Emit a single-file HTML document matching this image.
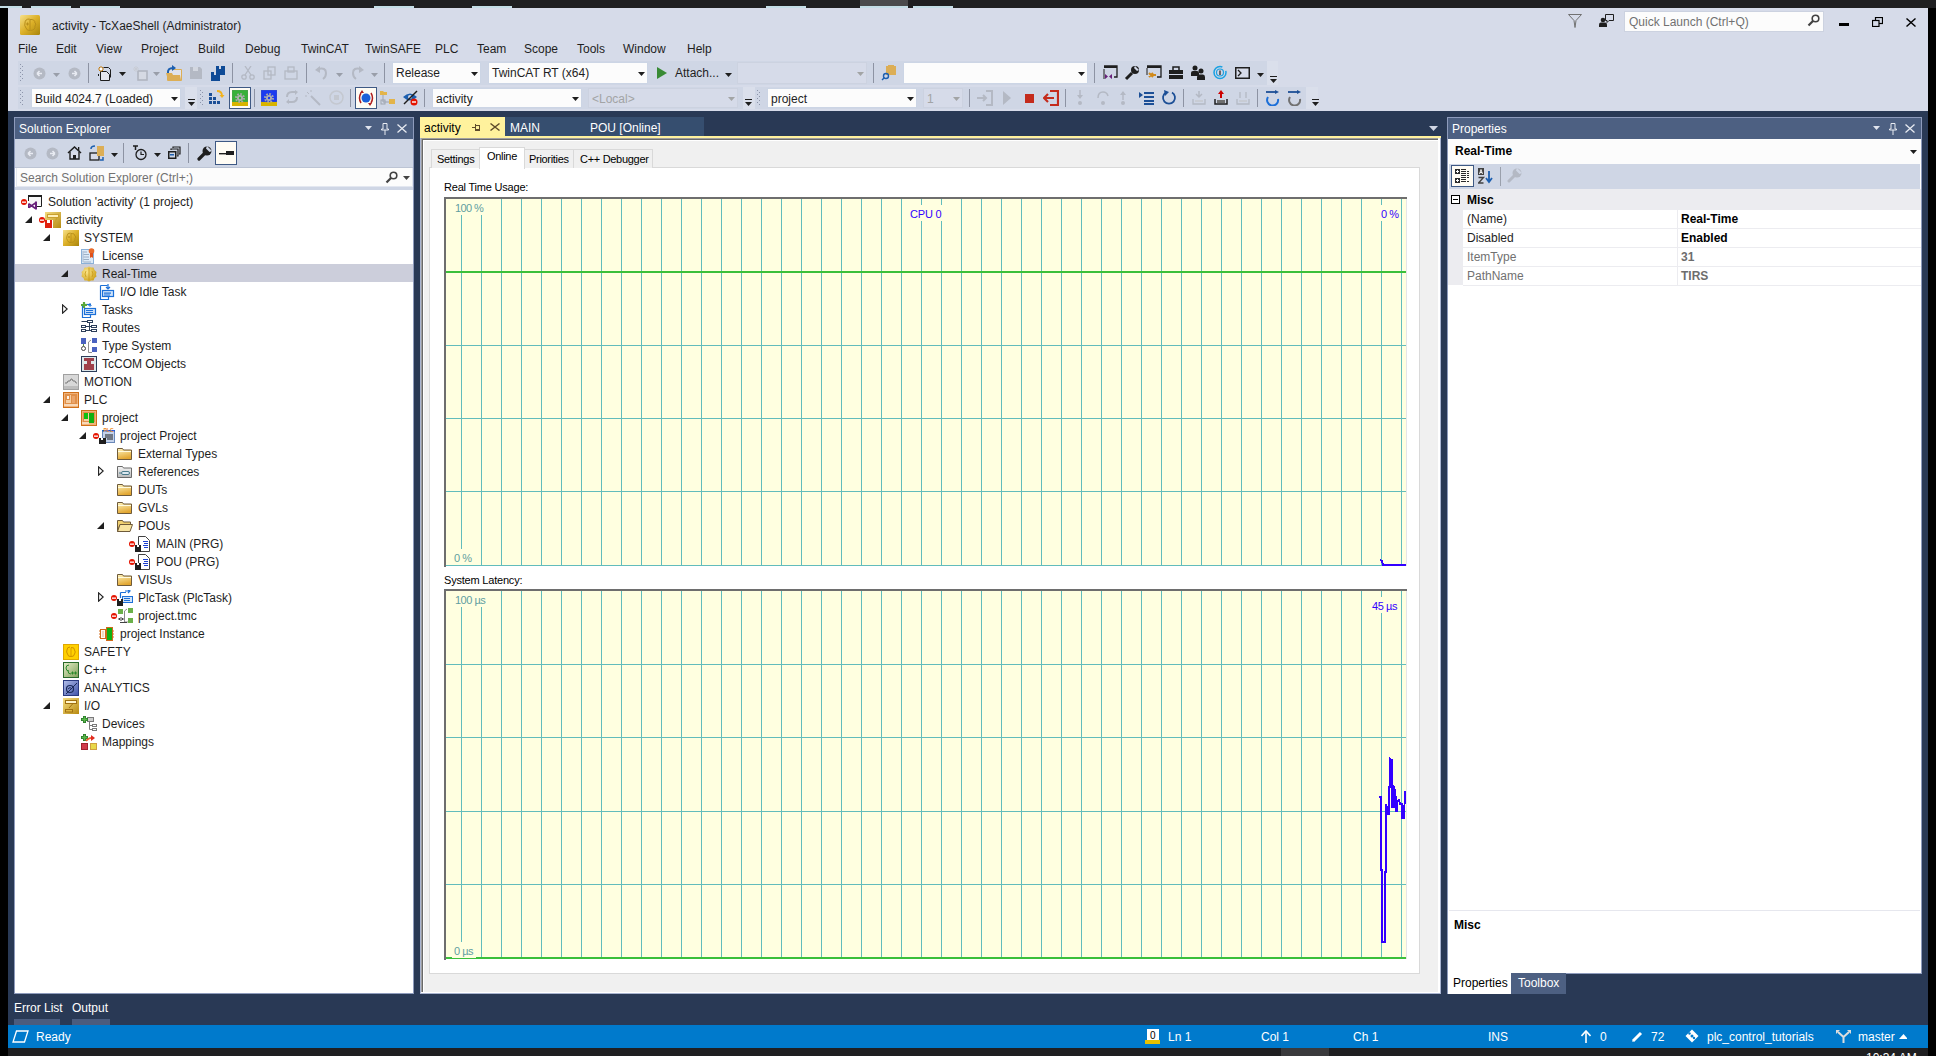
<!DOCTYPE html><html><head><meta charset="utf-8"><style>
html,body{margin:0;padding:0;width:1936px;height:1056px;overflow:hidden;background:#000}
body{position:relative;font-family:"Liberation Sans",sans-serif}
div,span,svg{position:absolute;display:block}
span{white-space:nowrap}
</style></head><body>
<div style="left:0px;top:0px;width:1936px;height:1056px;background:#000"></div>
<div style="left:0px;top:0px;width:1936px;height:8px;background:#1f1f21"></div>
<div style="left:0px;top:6px;width:22px;height:2px;background:#c3dde6"></div>
<div style="left:31px;top:6px;width:40px;height:2px;background:#c3dde6"></div>
<div style="left:80px;top:6px;width:40px;height:2px;background:#c3dde6"></div>
<div style="left:374px;top:6px;width:40px;height:2px;background:#c3dde6"></div>
<div style="left:472px;top:6px;width:40px;height:2px;background:#c3dde6"></div>
<div style="left:766px;top:6px;width:40px;height:2px;background:#c3dde6"></div>
<div style="left:860px;top:6px;width:48px;height:2px;background:#c3dde6"></div>
<div style="left:913px;top:6px;width:40px;height:2px;background:#c3dde6"></div>
<div style="left:860px;top:0px;width:48px;height:6px;background:#4a4a4c"></div>
<div style="left:8px;top:8px;width:1920px;height:103px;background:#d6dbe9"></div>
<div style="left:8px;top:111px;width:1920px;height:914px;background:#293955"></div>
<div style="left:8px;top:1025px;width:1920px;height:23px;background:#007acc"></div>
<div style="left:8px;top:1048px;width:1920px;height:8px;background:#1f1f21"></div>
<div style="left:1281px;top:1048px;width:48px;height:8px;background:#3a3a3c"></div>
<span style="left:1866px;top:1051px;font-size:12px;line-height:14px;color:#fff;font-weight:normal;">10:34 AM</span>
<svg style="left:20px;top:15px;" width="20" height="20" viewBox="0 0 20 20"><defs><linearGradient id="g1" x1="0" y1="0" x2="1" y2="1"><stop offset="0" stop-color="#f6e08a"/><stop offset="0.5" stop-color="#dcb028"/><stop offset="1" stop-color="#a8840c"/></linearGradient></defs><rect x="0" y="0" width="20" height="20" rx="1.5" fill="url(#g1)"/><path d="M9.5 4Q5 4 5 8Q4 10.5 6 13Q7 16 10 15.5" fill="none" stroke="#b88e1a" stroke-width="1"/><path d="M10 4V16M10 4.5Q15 4 15 8L16 9L15 11Q15.5 15 10.5 15.5" fill="none" stroke="#b88e1a" stroke-width="1"/><path d="M6 9H9M7.5 7.5V10.5" stroke="#b88e1a" stroke-width="1"/></svg>
<span style="left:52px;top:19px;font-size:12px;line-height:14px;color:#1e1e1e;font-weight:normal;">activity - TcXaeShell (Administrator)</span>
<span style="left:18px;top:42px;font-size:12px;line-height:14px;color:#1e1e1e;font-weight:normal;">File</span>
<span style="left:56px;top:42px;font-size:12px;line-height:14px;color:#1e1e1e;font-weight:normal;">Edit</span>
<span style="left:96px;top:42px;font-size:12px;line-height:14px;color:#1e1e1e;font-weight:normal;">View</span>
<span style="left:141px;top:42px;font-size:12px;line-height:14px;color:#1e1e1e;font-weight:normal;">Project</span>
<span style="left:198px;top:42px;font-size:12px;line-height:14px;color:#1e1e1e;font-weight:normal;">Build</span>
<span style="left:245px;top:42px;font-size:12px;line-height:14px;color:#1e1e1e;font-weight:normal;">Debug</span>
<span style="left:301px;top:42px;font-size:12px;line-height:14px;color:#1e1e1e;font-weight:normal;">TwinCAT</span>
<span style="left:365px;top:42px;font-size:12px;line-height:14px;color:#1e1e1e;font-weight:normal;">TwinSAFE</span>
<span style="left:435px;top:42px;font-size:12px;line-height:14px;color:#1e1e1e;font-weight:normal;">PLC</span>
<span style="left:477px;top:42px;font-size:12px;line-height:14px;color:#1e1e1e;font-weight:normal;">Team</span>
<span style="left:524px;top:42px;font-size:12px;line-height:14px;color:#1e1e1e;font-weight:normal;">Scope</span>
<span style="left:577px;top:42px;font-size:12px;line-height:14px;color:#1e1e1e;font-weight:normal;">Tools</span>
<span style="left:623px;top:42px;font-size:12px;line-height:14px;color:#1e1e1e;font-weight:normal;">Window</span>
<span style="left:687px;top:42px;font-size:12px;line-height:14px;color:#1e1e1e;font-weight:normal;">Help</span>
<svg style="left:1568px;top:14px;" width="14" height="14" viewBox="0 0 14 14"><path d="M0.5 0.5H13.5L8 6.5L7 13.5L6 6.5Z" fill="none" stroke="#717171" stroke-width="1"/></svg>
<svg style="left:1599px;top:14px;" width="15" height="14" viewBox="0 0 15 14"><circle cx="4" cy="6" r="2.3" fill="#1e1e1e"/><path d="M0 13V10.5Q0 8.5 2 8.5H6Q8 8.5 8 10.5V13Z" fill="#1e1e1e"/><path d="M6.5 0.5H14.5V6.5H10L8 8.5V6.5H6.5Z" fill="none" stroke="#1e1e1e" stroke-width="1"/></svg>
<div style="left:1624px;top:11px;width:200px;height:21px;background:#fcfcfc;border:1px solid #ccd2e0;box-sizing:border-box"></div>
<span style="left:1629px;top:15px;font-size:12px;line-height:14px;color:#717171;font-weight:normal;">Quick Launch (Ctrl+Q)</span>
<svg style="left:1807px;top:14px;" width="13" height="13" viewBox="0 0 13 13"><circle cx="8.5" cy="4.5" r="3.3" fill="none" stroke="#424242" stroke-width="1.6"/><path d="M6.2 6.8L1.5 11.5" stroke="#424242" stroke-width="2.2"/></svg>
<div style="left:1839px;top:23px;width:10px;height:3px;background:#000"></div>
<svg style="left:1872px;top:17px;" width="11" height="10" viewBox="0 0 11 10"><rect x="3.5" y="0.5" width="7" height="6" fill="none" stroke="#000" stroke-width="1.2"/><rect x="0.5" y="3.5" width="6.5" height="6" fill="#d6dbe9" stroke="#000" stroke-width="1.2"/></svg>
<svg style="left:1906px;top:18px;" width="10" height="9" viewBox="0 0 10 9"><path d="M0.5 0.5L9.5 8.5M9.5 0.5L0.5 8.5" stroke="#000" stroke-width="1.4"/></svg>
<div style="left:18px;top:61px;width:1249px;height:24px;background:#cfd6e5"></div>
<div style="left:1267px;top:61px;width:11px;height:24px;background:#dadfeb"></div>
<svg style="left:20px;top:64px;" width="4" height="18" viewBox="0 0 4 18"><rect x="0" y="0" width="1" height="1" fill="#8d95ab"/><rect x="2" y="2" width="1" height="1" fill="#8d95ab"/><rect x="0" y="4" width="1" height="1" fill="#8d95ab"/><rect x="2" y="6" width="1" height="1" fill="#8d95ab"/><rect x="0" y="8" width="1" height="1" fill="#8d95ab"/><rect x="2" y="10" width="1" height="1" fill="#8d95ab"/><rect x="0" y="12" width="1" height="1" fill="#8d95ab"/><rect x="2" y="14" width="1" height="1" fill="#8d95ab"/><rect x="0" y="16" width="1" height="1" fill="#8d95ab"/></svg>
<svg style="left:33px;top:67px;" width="13" height="13" viewBox="0 0 13 13"><circle cx="6.5" cy="6.5" r="6" fill="#b4b9c4"/><path d="M4 6.5H9M4 6.5L6.5 4M4 6.5L6.5 9" stroke="#e8ebf2" stroke-width="1.6" fill="none"/></svg>
<svg style="left:53px;top:73px;" width="7" height="4" viewBox="0 0 7 4"><path d="M0 0H7L3.5 4Z" fill="#999ea9"/></svg>
<svg style="left:68px;top:67px;" width="13" height="13" viewBox="0 0 13 13"><circle cx="6.5" cy="6.5" r="6" fill="#b4b9c4"/><path d="M4 6.5H9M9 6.5L6.5 4M9 6.5L6.5 9" stroke="#e8ebf2" stroke-width="1.6" fill="none"/></svg>
<div style="left:88px;top:63px;width:1px;height:20px;background:#8d93a3"></div>
<svg style="left:97px;top:65px;" width="16" height="16" viewBox="0 0 16 16"><path d="M6.5 2.5H11.5L13.5 4.5V12.5" fill="none" stroke="#1e1e1e"/><path d="M3.5 6.5H9.5L12.5 9.5V15.5H3.5Z" fill="#e6e7ee" stroke="#1e1e1e"/><path d="M1.5 9V11" stroke="#1e1e1e"/><g stroke="#c77c0e" stroke-width="1"><path d="M4 1V7M1 4H7M2 2L6 6M6 2L2 6"/></g><circle cx="4" cy="4" r="1.2" fill="#fff"/></svg>
<svg style="left:119px;top:72px;" width="7" height="4" viewBox="0 0 7 4"><path d="M0 0H7L3.5 4Z" fill="#1e1e1e"/></svg>
<svg style="left:132px;top:65px;" width="16" height="16" viewBox="0 0 16 16"><rect x="6" y="6" width="9" height="9" fill="#d5d9e3" stroke="#b0b5c0" stroke-width="1.6"/><g stroke="#c8ccd5" stroke-width="1"><path d="M4 1V7M1 4H7M2 2L6 6M6 2L2 6"/></g></svg>
<svg style="left:153px;top:72px;" width="7" height="4" viewBox="0 0 7 4"><path d="M0 0H7L3.5 4Z" fill="#999ea9"/></svg>
<svg style="left:166px;top:65px;" width="16" height="16" viewBox="0 0 16 16"><path d="M5.5 4.5H15.5V15.5H1.5V6" fill="#e0e3ec" stroke="#dcae56"/><path d="M0 8H6L7 10H14L15 15H2Z" fill="#dcae56"/><path d="M2 8Q1.5 3 7 3" stroke="#1c5fb0" stroke-width="2" fill="none"/><path d="M6 0L10 3L6 6Z" fill="#1c5fb0"/></svg>
<svg style="left:189px;top:66px;" width="14" height="14" viewBox="0 0 14 14"><path d="M1 1H11L13 3V13H1Z" fill="#b4b9c4"/><rect x="4" y="1" width="5" height="4" fill="#d3d7e0"/></svg>
<svg style="left:210px;top:65px;shape-rendering:crispEdges" width="16" height="16" viewBox="0 0 16 16"><path d="M6 1H14L15 2V10H6Z" fill="#0e4a96"/><rect x="9" y="1" width="2" height="3" fill="#cfd6e5"/><path d="M1 7H9L10 8V16H1Z" fill="#0e4a96"/><rect x="4" y="7" width="2" height="3" fill="#cfd6e5"/></svg>
<div style="left:232px;top:63px;width:1px;height:20px;background:#8d93a3"></div>
<svg style="left:241px;top:66px;" width="14" height="14" viewBox="0 0 14 14"><circle cx="3" cy="11" r="2.2" fill="none" stroke="#b4b9c4" stroke-width="1.3"/><circle cx="11" cy="11" r="2.2" fill="none" stroke="#b4b9c4" stroke-width="1.3"/><path d="M4 9L10 0M10 9L4 0" stroke="#b4b9c4" stroke-width="1.3"/></svg>
<svg style="left:263px;top:66px;" width="14" height="14" viewBox="0 0 14 14"><rect x="1" y="5" width="7" height="8" fill="none" stroke="#b4b9c4" stroke-width="1.3"/><rect x="5" y="1" width="7" height="8" fill="none" stroke="#b4b9c4" stroke-width="1.3"/></svg>
<svg style="left:284px;top:66px;" width="14" height="14" viewBox="0 0 14 14"><rect x="1" y="5" width="12" height="8" fill="none" stroke="#b4b9c4" stroke-width="1.3"/><rect x="4" y="1" width="6" height="5" fill="none" stroke="#b4b9c4" stroke-width="1.3"/></svg>
<div style="left:306px;top:63px;width:1px;height:20px;background:#8d93a3"></div>
<svg style="left:315px;top:66px;" width="14" height="14" viewBox="0 0 14 14"><path d="M3 3Q11 1 11 7Q11 11 8 13" stroke="#b4b9c4" stroke-width="2" fill="none"/><path d="M0 4L5 0V7Z" fill="#b4b9c4"/></svg>
<svg style="left:336px;top:73px;" width="7" height="4" viewBox="0 0 7 4"><path d="M0 0H7L3.5 4Z" fill="#999ea9"/></svg>
<svg style="left:350px;top:66px;" width="14" height="14" viewBox="0 0 14 14"><path d="M11 3Q3 1 3 7Q3 11 6 13" stroke="#b4b9c4" stroke-width="2" fill="none"/><path d="M14 4L9 0V7Z" fill="#b4b9c4"/></svg>
<svg style="left:371px;top:73px;" width="7" height="4" viewBox="0 0 7 4"><path d="M0 0H7L3.5 4Z" fill="#999ea9"/></svg>
<div style="left:384px;top:63px;width:1px;height:20px;background:#8d93a3"></div>
<div style="left:392px;top:62px;width:89px;height:22px;background:#fcfcfc;border:1px solid #ccd5e5;box-sizing:border-box"></div>
<span style="left:396px;top:66px;font-size:12px;line-height:14px;color:#1e1e1e;font-weight:normal;">Release</span>
<svg style="left:471px;top:72px;" width="7" height="4" viewBox="0 0 7 4"><path d="M0 0H7L3.5 4Z" fill="#1e1e1e"/></svg>
<div style="left:488px;top:62px;width:160px;height:22px;background:#fcfcfc;border:1px solid #ccd5e5;box-sizing:border-box"></div>
<span style="left:492px;top:66px;font-size:12px;line-height:14px;color:#1e1e1e;font-weight:normal;">TwinCAT RT (x64)</span>
<svg style="left:638px;top:72px;" width="7" height="4" viewBox="0 0 7 4"><path d="M0 0H7L3.5 4Z" fill="#1e1e1e"/></svg>
<svg style="left:657px;top:67px;" width="10" height="12" viewBox="0 0 10 12"><path d="M0 0L10 6L0 12Z" fill="#388a34"/></svg>
<span style="left:675px;top:66px;font-size:12px;line-height:14px;color:#1e1e1e;font-weight:normal;">Attach...</span>
<svg style="left:725px;top:73px;" width="7" height="4" viewBox="0 0 7 4"><path d="M0 0H7L3.5 4Z" fill="#1e1e1e"/></svg>
<div style="left:737px;top:62px;width:130px;height:22px;background:#d6dbe9;border:1px solid #ccd2e0;box-sizing:border-box"></div>
<svg style="left:857px;top:72px;" width="7" height="4" viewBox="0 0 7 4"><path d="M0 0H7L3.5 4Z" fill="#a2a4a5"/></svg>
<div style="left:873px;top:63px;width:1px;height:20px;background:#8d93a3"></div>
<svg style="left:881px;top:65px;" width="16" height="16" viewBox="0 0 16 16"><rect x="5" y="1" width="10" height="9" fill="#dcae56"/><rect x="7" y="0" width="6" height="2" fill="#dcae56"/><circle cx="5" cy="11" r="2.5" fill="none" stroke="#1c5fb0" stroke-width="1.4"/><path d="M3 13L1 15" stroke="#1c5fb0" stroke-width="1.5"/></svg>
<div style="left:903px;top:62px;width:185px;height:22px;background:#fcfcfc;border:1px solid #ccd5e5;box-sizing:border-box"></div>
<svg style="left:1078px;top:72px;" width="7" height="4" viewBox="0 0 7 4"><path d="M0 0H7L3.5 4Z" fill="#1e1e1e"/></svg>
<div style="left:1094px;top:63px;width:1px;height:20px;background:#8d93a3"></div>
<svg style="left:1102px;top:65px;" width="16" height="16" viewBox="0 0 16 16"><path d="M2 1H15V12H12" fill="none" stroke="#1e1e1e" stroke-width="1.3"/><rect x="2" y="1" width="13" height="2" fill="#1e1e1e"/><path d="M2 4V14" stroke="#1e1e1e" stroke-width="1"/><path d="M3 9L6 11.5L3 14ZM10 9L7 11.5L10 14Z" fill="#68217a"/></svg>
<svg style="left:1124px;top:65px;" width="16" height="16" viewBox="0 0 16 16"><path d="M2 14L8 8" stroke="#1e1e1e" stroke-width="3"/><circle cx="11" cy="5" r="4" fill="#1e1e1e"/><path d="M11 1L15 5L13 6L10 3Z" fill="#cfd6e5"/></svg>
<svg style="left:1146px;top:65px;" width="16" height="16" viewBox="0 0 16 16"><path d="M1 1H15V12H11" fill="none" stroke="#1e1e1e" stroke-width="1.3"/><rect x="1" y="1" width="14" height="2" fill="#1e1e1e"/><path d="M1 3V10" stroke="#1e1e1e"/><path d="M3 8L7 12M7 8L3 12M6 10H10" stroke="#d18a1a" stroke-width="2"/></svg>
<svg style="left:1169px;top:66px;" width="14" height="14" viewBox="0 0 14 14"><rect x="0" y="4" width="14" height="9" fill="#1e1e1e"/><path d="M4 4V1H10V4" fill="none" stroke="#1e1e1e" stroke-width="1.5"/><rect x="0" y="8" width="14" height="1" fill="#cfd6e5"/></svg>
<svg style="left:1191px;top:65px;" width="15" height="15" viewBox="0 0 15 15"><circle cx="4" cy="3" r="2.5" fill="#1e1e1e"/><path d="M0 11V8Q0 6 2 6H6Q8 6 8 8V11Z" fill="#1e1e1e"/><circle cx="10" cy="6" r="2.5" fill="#1e1e1e"/><path d="M6 15V12Q6 9.5 8 9.5H12Q14 9.5 14 12V15Z" fill="#1e1e1e"/></svg>
<svg style="left:1213px;top:65px;" width="14" height="15" viewBox="0 0 14 15"><circle cx="7" cy="7.5" r="6" fill="none" stroke="#1ba1e2" stroke-width="1.5" stroke-dasharray="30 5"/><circle cx="7" cy="7.5" r="3.5" fill="none" stroke="#1ba1e2" stroke-width="1.2"/><path d="M7 5.5V10" stroke="#1e1e1e" stroke-width="1.2"/></svg>
<svg style="left:1235px;top:67px;" width="15" height="12" viewBox="0 0 15 12"><rect x="0.75" y="0.75" width="13.5" height="10.5" fill="#d6dbe9" stroke="#1e1e1e" stroke-width="1.5"/><path d="M3 3L6 6L3 9" stroke="#1e1e1e" stroke-width="1.3" fill="none"/></svg>
<svg style="left:1257px;top:73px;" width="7" height="4" viewBox="0 0 7 4"><path d="M0 0H7L3.5 4Z" fill="#1e1e1e"/></svg>
<svg style="left:1270px;top:76px;" width="7" height="8" viewBox="0 0 7 8"><rect x="0" y="0" width="7" height="1" fill="#1e1e1e"/><path d="M0 3H7L3.5 7Z" fill="#1e1e1e"/></svg>
<div style="left:18px;top:87px;width:167px;height:22px;background:#cfd6e5"></div>
<div style="left:185px;top:87px;width:12px;height:22px;background:#dadfeb"></div>
<svg style="left:20px;top:90px;" width="4" height="16" viewBox="0 0 4 16"><rect x="0" y="0" width="1" height="1" fill="#8d95ab"/><rect x="2" y="2" width="1" height="1" fill="#8d95ab"/><rect x="0" y="4" width="1" height="1" fill="#8d95ab"/><rect x="2" y="6" width="1" height="1" fill="#8d95ab"/><rect x="0" y="8" width="1" height="1" fill="#8d95ab"/><rect x="2" y="10" width="1" height="1" fill="#8d95ab"/><rect x="0" y="12" width="1" height="1" fill="#8d95ab"/><rect x="2" y="14" width="1" height="1" fill="#8d95ab"/></svg>
<div style="left:31px;top:88px;width:150px;height:20px;background:#fcfcfc;border:1px solid #ccd5e5;box-sizing:border-box"></div>
<span style="left:35px;top:92px;font-size:12px;line-height:14px;color:#1e1e1e;font-weight:normal;">Build 4024.7 (Loaded)</span>
<svg style="left:171px;top:97px;" width="7" height="4" viewBox="0 0 7 4"><path d="M0 0H7L3.5 4Z" fill="#1e1e1e"/></svg>
<svg style="left:188px;top:99px;" width="7" height="8" viewBox="0 0 7 8"><rect x="0" y="0" width="7" height="1" fill="#1e1e1e"/><path d="M0 3H7L3.5 7Z" fill="#1e1e1e"/></svg>
<div style="left:197px;top:87px;width:546px;height:22px;background:#cfd6e5"></div>
<div style="left:743px;top:87px;width:12px;height:22px;background:#dadfeb"></div>
<svg style="left:200px;top:90px;" width="4" height="16" viewBox="0 0 4 16"><rect x="0" y="0" width="1" height="1" fill="#8d95ab"/><rect x="2" y="2" width="1" height="1" fill="#8d95ab"/><rect x="0" y="4" width="1" height="1" fill="#8d95ab"/><rect x="2" y="6" width="1" height="1" fill="#8d95ab"/><rect x="0" y="8" width="1" height="1" fill="#8d95ab"/><rect x="2" y="10" width="1" height="1" fill="#8d95ab"/><rect x="0" y="12" width="1" height="1" fill="#8d95ab"/><rect x="2" y="14" width="1" height="1" fill="#8d95ab"/></svg>
<svg style="left:209px;top:89px;" width="16" height="16" viewBox="0 0 16 16"><g fill="#1c4f96"><rect x="0" y="4" width="3" height="3"/><rect x="0" y="8" width="3" height="3"/><rect x="4" y="8" width="3" height="3"/><rect x="0" y="12" width="3" height="3"/><rect x="4" y="12" width="3" height="3"/><rect x="8" y="12" width="3" height="3"/></g><path d="M8 2Q13 2 13 7" stroke="#f2b21b" stroke-width="1.8" fill="none"/><path d="M10.5 6H15.5L13 9Z" fill="#f2b21b"/></svg>
<div style="left:229px;top:87px;width:22px;height:22px;background:#fffcf4;border:1px solid #3e5984;box-sizing:border-box"></div>
<svg style="left:232px;top:90px;" width="16" height="16" viewBox="0 0 16 16"><rect x="0" y="0" width="16" height="12" fill="#38b038" stroke="#6a8a6a" stroke-width="0.5"/><rect x="0" y="12" width="16" height="4" fill="#d8b400"/><circle cx="8" cy="8" r="4" fill="none" stroke="#a8a8a8" stroke-width="2" stroke-dasharray="1.7 1.4"/><circle cx="8" cy="8" r="3" fill="#b0b0b0"/><circle cx="8" cy="8" r="1.2" fill="#38b038"/></svg>
<div style="left:254px;top:89px;width:1px;height:18px;background:#8d93a3"></div>
<svg style="left:261px;top:90px;" width="16" height="16" viewBox="0 0 16 16"><rect x="0" y="0" width="16" height="12" fill="#1a3af0" stroke="#5a6a9a" stroke-width="0.5"/><rect x="0" y="12" width="16" height="4" fill="#d8b400"/><circle cx="8" cy="8" r="4" fill="none" stroke="#a8a8a8" stroke-width="2" stroke-dasharray="1.7 1.4"/><circle cx="8" cy="8" r="3" fill="#b0b0b0"/><circle cx="8" cy="8" r="1.2" fill="#1a3af0"/></svg>
<svg style="left:285px;top:90px;" width="14" height="14" viewBox="0 0 14 14"><path d="M2 7Q2 2 7 2H11M12 7Q12 12 7 12H3" stroke="#b4b9c4" stroke-width="2" fill="none"/><path d="M10 0L13 2L10 5ZM4 9L1 12L4 14Z" fill="#b4b9c4"/></svg>
<svg style="left:305px;top:90px;" width="16" height="16" viewBox="0 0 16 16"><path d="M6 6L15 15" stroke="#b4b9c4" stroke-width="2"/><path d="M2 2L4 4M6 0V2M0 6H2" stroke="#b4b9c4" stroke-width="1"/></svg>
<svg style="left:329px;top:90px;" width="15" height="15" viewBox="0 0 15 15"><circle cx="7.5" cy="7.5" r="6.5" fill="none" stroke="#c4c8d0" stroke-width="1.5"/><rect x="5" y="5" width="5" height="5" fill="#c4c8d0"/></svg>
<div style="left:350px;top:89px;width:1px;height:18px;background:#8d93a3"></div>
<div style="left:355px;top:87px;width:22px;height:22px;background:#fffcf4;border:1px solid #3e5984;box-sizing:border-box"></div>
<svg style="left:358px;top:90px;" width="16" height="16" viewBox="0 0 16 16"><circle cx="8" cy="8" r="4.5" fill="#1c5fd8"/><path d="M3 3Q0 8 3 13M13 3Q16 8 13 13" stroke="#b02020" stroke-width="1.5" fill="none"/><path d="M4 0L6 3L2 3Z M12 16L10 13L14 13Z" fill="#b02020"/></svg>
<svg style="left:380px;top:90px;" width="16" height="16" viewBox="0 0 16 16"><path d="M0 1H3L4 2H7V5H0Z" fill="#e3b44a"/><path d="M3 5V12H9" stroke="#9da3ae" stroke-width="1" fill="none"/><rect x="9" y="9" width="6" height="5" fill="#e3b44a"/><rect x="1" y="10" width="4" height="4" fill="none" stroke="#9da3ae"/></svg>
<svg style="left:402px;top:90px;" width="16" height="16" viewBox="0 0 16 16"><path d="M1 7Q8 0 15 7Q8 14 1 7Z" fill="#1c5fb0"/><circle cx="8" cy="7" r="2" fill="#cfd6e5"/><path d="M2 14L15 1" stroke="#1e1e1e" stroke-width="1.5"/><circle cx="12" cy="12" r="3.5" fill="#e51400"/><rect x="10" y="11.3" width="4" height="1.4" fill="#fff"/></svg>
<div style="left:424px;top:89px;width:1px;height:18px;background:#8d93a3"></div>
<div style="left:432px;top:88px;width:150px;height:20px;background:#fcfcfc;border:1px solid #ccd5e5;box-sizing:border-box"></div>
<span style="left:436px;top:92px;font-size:12px;line-height:14px;color:#1e1e1e;font-weight:normal;">activity</span>
<svg style="left:572px;top:97px;" width="7" height="4" viewBox="0 0 7 4"><path d="M0 0H7L3.5 4Z" fill="#1e1e1e"/></svg>
<div style="left:588px;top:88px;width:150px;height:20px;background:#d6dbe9;border:1px solid #ccd2e0;box-sizing:border-box"></div>
<span style="left:592px;top:92px;font-size:12px;line-height:14px;color:#a2a4a5;font-weight:normal;">&lt;Local&gt;</span>
<svg style="left:728px;top:97px;" width="7" height="4" viewBox="0 0 7 4"><path d="M0 0H7L3.5 4Z" fill="#a2a4a5"/></svg>
<svg style="left:745px;top:99px;" width="7" height="8" viewBox="0 0 7 8"><rect x="0" y="0" width="7" height="1" fill="#1e1e1e"/><path d="M0 3H7L3.5 7Z" fill="#1e1e1e"/></svg>
<div style="left:755px;top:87px;width:551px;height:22px;background:#cfd6e5"></div>
<div style="left:1306px;top:87px;width:12px;height:22px;background:#dadfeb"></div>
<svg style="left:757px;top:90px;" width="4" height="16" viewBox="0 0 4 16"><rect x="0" y="0" width="1" height="1" fill="#8d95ab"/><rect x="2" y="2" width="1" height="1" fill="#8d95ab"/><rect x="0" y="4" width="1" height="1" fill="#8d95ab"/><rect x="2" y="6" width="1" height="1" fill="#8d95ab"/><rect x="0" y="8" width="1" height="1" fill="#8d95ab"/><rect x="2" y="10" width="1" height="1" fill="#8d95ab"/><rect x="0" y="12" width="1" height="1" fill="#8d95ab"/><rect x="2" y="14" width="1" height="1" fill="#8d95ab"/></svg>
<div style="left:767px;top:88px;width:150px;height:20px;background:#fcfcfc;border:1px solid #ccd5e5;box-sizing:border-box"></div>
<span style="left:771px;top:92px;font-size:12px;line-height:14px;color:#1e1e1e;font-weight:normal;">project</span>
<svg style="left:907px;top:97px;" width="7" height="4" viewBox="0 0 7 4"><path d="M0 0H7L3.5 4Z" fill="#1e1e1e"/></svg>
<div style="left:923px;top:88px;width:40px;height:20px;background:#d6dbe9;border:1px solid #ccd2e0;box-sizing:border-box"></div>
<span style="left:927px;top:92px;font-size:12px;line-height:14px;color:#a2a4a5;font-weight:normal;">1</span>
<svg style="left:953px;top:97px;" width="7" height="4" viewBox="0 0 7 4"><path d="M0 0H7L3.5 4Z" fill="#a2a4a5"/></svg>
<div style="left:969px;top:89px;width:1px;height:18px;background:#8d93a3"></div>
<svg style="left:977px;top:90px;" width="16" height="16" viewBox="0 0 16 16"><path d="M0 8H9M6 5L9 8L6 11" stroke="#b4b9c4" stroke-width="2" fill="none"/><path d="M9 1H15V15H9" stroke="#b4b9c4" stroke-width="2" fill="none"/></svg>
<svg style="left:1003px;top:91px;" width="8" height="14" viewBox="0 0 8 14"><path d="M0 0L8 7L0 14Z" fill="#b4b9c4"/></svg>
<div style="left:1025px;top:94px;width:9px;height:9px;background:#c42b1c"></div>
<svg style="left:1043px;top:90px;" width="16" height="16" viewBox="0 0 16 16"><path d="M7 1H15V15H7" stroke="#c42b1c" stroke-width="2.2" fill="none"/><path d="M1 8H11M5 4L1 8L5 12" stroke="#c42b1c" stroke-width="2.2" fill="none"/></svg>
<div style="left:1065px;top:89px;width:1px;height:18px;background:#8d93a3"></div>
<svg style="left:1077px;top:90px;" width="6" height="16" viewBox="0 0 6 16"><path d="M3 0V8" stroke="#b4b9c4" stroke-width="1.5"/><path d="M0 5L3 9L6 5Z" fill="#b4b9c4"/><circle cx="3" cy="13" r="2" fill="#b4b9c4"/></svg>
<svg style="left:1097px;top:90px;" width="12" height="16" viewBox="0 0 12 16"><path d="M1 8Q1 2 6 2Q10 2 11 6" stroke="#b4b9c4" stroke-width="1.5" fill="none"/><circle cx="6" cy="13" r="2" fill="#b4b9c4"/></svg>
<svg style="left:1120px;top:90px;" width="6" height="16" viewBox="0 0 6 16"><path d="M3 2V10" stroke="#b4b9c4" stroke-width="1.5"/><path d="M0 5L3 1L6 5Z" fill="#b4b9c4"/><circle cx="3" cy="13" r="2" fill="#b4b9c4"/></svg>
<svg style="left:1139px;top:91px;" width="16" height="14" viewBox="0 0 16 14"><path d="M0 1L4 4L0 7Z" fill="#1c4f96"/><g fill="#1c4f96"><rect x="5" y="1" width="10" height="2"/><rect x="5" y="5" width="10" height="2"/><rect x="5" y="9" width="10" height="2"/><rect x="5" y="12" width="10" height="2"/></g></svg>
<svg style="left:1161px;top:90px;" width="16" height="16" viewBox="0 0 16 16"><path d="M5 2.5A6 6 0 1 0 11 2.5" stroke="#1c4f96" stroke-width="1.8" fill="none"/><path d="M3 0L8 2L4 6Z" fill="#1c4f96"/></svg>
<div style="left:1183px;top:89px;width:1px;height:18px;background:#8d93a3"></div>
<svg style="left:1192px;top:90px;" width="14" height="16" viewBox="0 0 14 16"><path d="M1 9V14H13V9" stroke="#b4b9c4" stroke-width="1.3" fill="none"/><rect x="3" y="10" width="8" height="2" fill="#c8ccd4"/><path d="M7 1V7M4 4L7 7L10 4" stroke="#b4b9c4" stroke-width="1.5" fill="none"/></svg>
<svg style="left:1214px;top:90px;" width="14" height="16" viewBox="0 0 14 16"><path d="M1 9V14H13V9" stroke="#1e1e1e" stroke-width="1.5" fill="none"/><rect x="3" y="10" width="8" height="3" fill="#6f6f6f"/><path d="M7 8V3" stroke="#c00" stroke-width="2"/><path d="M4 4L7 0L10 4Z" fill="#c00"/></svg>
<svg style="left:1236px;top:90px;" width="14" height="16" viewBox="0 0 14 16"><path d="M1 9V14H13V9" stroke="#b4b9c4" stroke-width="1.3" fill="none"/><rect x="3" y="10" width="8" height="2" fill="#c8ccd4"/><path d="M4 8V2M10 8V2" stroke="#b4b9c4" stroke-width="1.3"/></svg>
<div style="left:1257px;top:89px;width:1px;height:18px;background:#8d93a3"></div>
<svg style="left:1265px;top:90px;" width="16" height="16" viewBox="0 0 16 16"><path d="M3 7A5.5 5.5 0 1 0 13 9" stroke="#1c6fd8" stroke-width="2" fill="none"/><path d="M1 2H11" stroke="#1c4f96" stroke-width="1.8"/><path d="M10 0L14 2L10 4Z" fill="#1c4f96"/></svg>
<svg style="left:1287px;top:90px;" width="16" height="16" viewBox="0 0 16 16"><path d="M3 7A5.5 5.5 0 1 0 13 9" stroke="#717171" stroke-width="2" fill="none"/><path d="M1 2H11" stroke="#1c4f96" stroke-width="1.8"/><path d="M10 0L14 2L10 4Z" fill="#1c4f96"/></svg>
<svg style="left:1312px;top:99px;" width="7" height="8" viewBox="0 0 7 8"><rect x="0" y="0" width="7" height="1" fill="#1e1e1e"/><path d="M0 3H7L3.5 7Z" fill="#1e1e1e"/></svg>
<svg style="left:12px;top:1030px;" width="17" height="13" viewBox="0 0 17 13"><path d="M4.5 1H16L12.5 12H1Z" fill="none" stroke="#fff" stroke-width="1.3"/></svg>
<span style="left:36px;top:1030px;font-size:12px;line-height:14px;color:#fff;font-weight:normal;">Ready</span>
<svg style="left:1145px;top:1029px;" width="15" height="15" viewBox="0 0 15 15"><rect x="2" y="0" width="12" height="12" fill="#fff"/><rect x="0" y="11" width="15" height="4" fill="#e8c000"/><text x="5" y="10" font-size="10" font-family="Liberation Sans" fill="#000">0</text></svg>
<span style="left:1168px;top:1030px;font-size:12px;line-height:14px;color:#fff;font-weight:normal;">Ln 1</span>
<span style="left:1261px;top:1030px;font-size:12px;line-height:14px;color:#fff;font-weight:normal;">Col 1</span>
<span style="left:1353px;top:1030px;font-size:12px;line-height:14px;color:#fff;font-weight:normal;">Ch 1</span>
<span style="left:1488px;top:1030px;font-size:12px;line-height:14px;color:#fff;font-weight:normal;">INS</span>
<span style="left:1600px;top:1030px;font-size:12px;line-height:14px;color:#fff;font-weight:normal;">0</span>
<span style="left:1651px;top:1030px;font-size:12px;line-height:14px;color:#fff;font-weight:normal;">72</span>
<span style="left:1707px;top:1030px;font-size:12px;line-height:14px;color:#fff;font-weight:normal;">plc_control_tutorials</span>
<span style="left:1858px;top:1030px;font-size:12px;line-height:14px;color:#fff;font-weight:normal;">master</span>
<svg style="left:1581px;top:1030px;" width="10" height="13" viewBox="0 0 10 13"><path d="M5 2V13" stroke="#fff" stroke-width="1.6"/><path d="M0.5 6L5 1L9.5 6" stroke="#fff" stroke-width="1.6" fill="none"/></svg>
<svg style="left:1631px;top:1030px;" width="13" height="13" viewBox="0 0 13 13"><path d="M2 11L10 3" stroke="#fff" stroke-width="3"/><path d="M1 12L2.5 9L4 10.5Z" fill="#fff"/></svg>
<svg style="left:1685px;top:1029px;" width="14" height="14" viewBox="0 0 14 14"><path d="M7 0.5L13.5 7L7 13.5L0.5 7Z" fill="#fff"/><circle cx="7" cy="7" r="1.5" fill="#007acc"/><circle cx="4.5" cy="4.5" r="1.2" fill="#007acc"/><circle cx="9" cy="9" r="1.2" fill="#007acc"/></svg>
<svg style="left:1836px;top:1030px;" width="15" height="13" viewBox="0 0 15 13"><path d="M7.5 13V7L2 2M7.5 7L13 2" stroke="#ddd" stroke-width="2" fill="none"/><path d="M0 0H4L0 4ZM15 0H11L15 4Z" fill="#ddd"/></svg>
<svg style="left:1899px;top:1034px;" width="8" height="5" viewBox="0 0 8 5"><path d="M0 5H9L4.5 0Z" fill="#fff"/></svg>
<span style="left:14px;top:1001px;font-size:12px;line-height:14px;color:#fff;font-weight:normal;">Error List</span>
<span style="left:72px;top:1001px;font-size:12px;line-height:14px;color:#fff;font-weight:normal;">Output</span>
<div style="left:14px;top:1019px;width:46px;height:6px;background:#4b5c7e"></div>
<div style="left:72px;top:1019px;width:38px;height:6px;background:#4b5c7e"></div>
<div style="left:14px;top:117px;width:400px;height:877px;background:#fff;border:1px solid #8e9bbc;box-sizing:border-box"></div>
<div style="left:15px;top:118px;width:398px;height:21px;background:#4d6082"></div>
<span style="left:19px;top:122px;font-size:12px;line-height:14px;color:#fff;font-weight:normal;">Solution Explorer</span>
<svg style="left:365px;top:126px;" width="7" height="4" viewBox="0 0 7 4"><path d="M0 0H7L3.5 4Z" fill="#e0e4ee"/></svg>
<svg style="left:381px;top:123px;" width="8" height="12" viewBox="0 0 8 12"><path d="M2 0.5H6V6H7.5V7H0.5V6H2Z" fill="none" stroke="#e8ebf2" stroke-width="1"/><path d="M4 7V12" stroke="#e8ebf2" stroke-width="1"/></svg>
<svg style="left:397px;top:124px;" width="10" height="9" viewBox="0 0 10 9"><path d="M0.5 0.5L9.5 8.5M9.5 0.5L0.5 8.5" stroke="#e8ebf2" stroke-width="1.3"/></svg>
<div style="left:15px;top:139px;width:398px;height:28px;background:#cfd6e5"></div>
<svg style="left:24px;top:147px;" width="13" height="13" viewBox="0 0 13 13"><circle cx="6.5" cy="6.5" r="6" fill="#b4b9c4"/><path d="M4 6.5H9M4 6.5L6.5 4M4 6.5L6.5 9" stroke="#e8ebf2" stroke-width="1.6" fill="none"/></svg>
<svg style="left:46px;top:147px;" width="13" height="13" viewBox="0 0 13 13"><circle cx="6.5" cy="6.5" r="6" fill="#b4b9c4"/><path d="M4 6.5H9M9 6.5L6.5 4M9 6.5L6.5 9" stroke="#e8ebf2" stroke-width="1.6" fill="none"/></svg>
<svg style="left:67px;top:146px;" width="15" height="14" viewBox="0 0 15 14"><path d="M1 7L7.5 1L14 7" stroke="#1e1e1e" stroke-width="1.5" fill="none"/><path d="M3 6V13H12V6" stroke="#1e1e1e" stroke-width="1.4" fill="#d8dbe8"/><rect x="6" y="9" width="3" height="4" fill="#1e1e1e"/><rect x="11" y="1" width="1.3" height="4" fill="#1e1e1e"/></svg>
<svg style="left:89px;top:145px;" width="16" height="16" viewBox="0 0 16 16"><rect x="1" y="8" width="9" height="7" fill="#d8dbe8" stroke="#1e1e1e" stroke-width="1.3"/><rect x="8" y="1" width="7" height="10" fill="#dcae56"/><path d="M2 4Q2 1 6 1" stroke="#1c5fb0" stroke-width="1.5" fill="none"/><path d="M14 12V15H11" stroke="#1c5fb0" stroke-width="1.5" fill="none"/></svg>
<svg style="left:111px;top:153px;" width="7" height="4" viewBox="0 0 7 4"><path d="M0 0H7L3.5 4Z" fill="#1e1e1e"/></svg>
<div style="left:123px;top:143px;width:1px;height:20px;background:#8d93a3"></div>
<svg style="left:133px;top:145px;" width="15" height="16" viewBox="0 0 15 16"><circle cx="8" cy="9.5" r="5" fill="none" stroke="#1e1e1e" stroke-width="1.3"/><path d="M8 6.5V9.5H11" stroke="#1e1e1e" stroke-width="1.2" fill="none"/><path d="M0 1H5M2.5 1V5" stroke="#1e1e1e" stroke-width="1.5"/></svg>
<svg style="left:154px;top:153px;" width="7" height="4" viewBox="0 0 7 4"><path d="M0 0H7L3.5 4Z" fill="#1e1e1e"/></svg>
<svg style="left:168px;top:146px;" width="13" height="13" viewBox="0 0 13 13"><rect x="0.75" y="5.75" width="7" height="6.5" fill="none" stroke="#1e1e1e" stroke-width="1.5"/><path d="M3 4V3H10V10H9M5 2V1H12V8H11" stroke="#1e1e1e" stroke-width="1.2" fill="none"/><rect x="2" y="8" width="4" height="1.5" fill="#1c5fb0"/></svg>
<div style="left:188px;top:143px;width:1px;height:20px;background:#8d93a3"></div>
<svg style="left:197px;top:146px;" width="15" height="15" viewBox="0 0 15 15"><path d="M2 13L8 7" stroke="#1e1e1e" stroke-width="3.2" stroke-linecap="round"/><circle cx="10" cy="5" r="4.5" fill="#1e1e1e"/><path d="M10 0L15 5L12.5 6L9 2.5Z" fill="#cfd6e5"/></svg>
<div style="left:215px;top:141px;width:22px;height:24px;background:#fffcf4;border:1px solid #3e5984;box-sizing:border-box"></div>
<svg style="left:219px;top:150px;" width="15" height="6" viewBox="0 0 15 6"><rect x="0" y="3" width="15" height="1.4" fill="#1e1e1e"/><rect x="7" y="1" width="8" height="4" fill="#1e1e1e"/></svg>
<div style="left:15px;top:167px;width:398px;height:1px;background:#bcc4d4"></div>
<div style="left:16px;top:168px;width:397px;height:19px;background:#fcfcfc;border:1px solid #e3e7f0;border-top:none;box-sizing:border-box"></div>
<div style="left:15px;top:187px;width:398px;height:3px;background:#cfd6e5"></div>
<span style="left:20px;top:171px;font-size:12px;line-height:14px;color:#717171;font-weight:normal;">Search Solution Explorer (Ctrl+;)</span>
<svg style="left:385px;top:171px;" width="13" height="13" viewBox="0 0 13 13"><circle cx="8.5" cy="4.5" r="3.3" fill="none" stroke="#424242" stroke-width="1.6"/><path d="M6.2 6.8L1.5 11.5" stroke="#424242" stroke-width="2.2"/></svg>
<svg style="left:403px;top:176px;" width="7" height="4" viewBox="0 0 7 4"><path d="M0 0H7L3.5 4Z" fill="#424242"/></svg>
<div style="left:15px;top:264px;width:398px;height:18px;background:#cccedb"></div>
<span style="left:48px;top:195px;font-size:12px;line-height:14px;color:#1e1e1e;font-weight:normal;">Solution 'activity' (1 project)</span>
<svg style="left:27px;top:194px;" width="16" height="16" viewBox="0 0 16 16"><path d="M1.5 1.5H14.5V12.5H10" fill="none" stroke="#1e1e1e" stroke-width="1"/><rect x="1" y="1" width="14" height="2" fill="#1e1e1e"/><path d="M1.5 2V7" stroke="#1e1e1e"/><rect x="2" y="3" width="12" height="8" fill="#f6f6f6"/><g fill="#68217a"><rect x="1" y="9.5" width="1.6" height="4.5"/><rect x="8" y="7.5" width="2" height="8"/></g><path d="M2 10L8.5 14.5M2 13.5L8.5 9" stroke="#68217a" stroke-width="1.6"/></svg>
<svg style="left:21px;top:199px;" width="6" height="6" viewBox="0 0 6 6"><circle cx="3" cy="3" r="3" fill="#e51400"/><rect x="1" y="2.5" width="4" height="1.3" fill="#fff"/></svg>
<span style="left:66px;top:213px;font-size:12px;line-height:14px;color:#1e1e1e;font-weight:normal;">activity</span>
<svg style="left:25px;top:216px;" width="7" height="7" viewBox="0 0 7 7"><path d="M7 0V7H0Z" fill="#1e1e1e"/></svg>
<svg style="left:45px;top:212px;" width="16" height="16" viewBox="0 0 16 16"><defs><linearGradient id="pg" x1="0" y1="0" x2="1" y2="1"><stop offset="0" stop-color="#f4dc80"/><stop offset="1" stop-color="#b48a10"/></linearGradient></defs><rect x="0" y="0" width="16" height="16" fill="url(#pg)"/><rect x="2.5" y="2.5" width="11" height="3" fill="#fff0b8" stroke="#c8a030"/><path d="M12 5.5L8 15" stroke="#c8a030" stroke-width="1.2"/><rect x="0" y="8" width="7" height="8" fill="#e0200f"/><rect x="2" y="8" width="3" height="3" fill="#fff"/><rect x="7" y="8" width="1" height="8" fill="#fff"/></svg>
<svg style="left:39px;top:217px;" width="6" height="6" viewBox="0 0 6 6"><circle cx="3" cy="3" r="3" fill="#e51400"/><rect x="1" y="2.5" width="4" height="1.3" fill="#fff"/></svg>
<span style="left:84px;top:231px;font-size:12px;line-height:14px;color:#1e1e1e;font-weight:normal;">SYSTEM</span>
<svg style="left:43px;top:234px;" width="7" height="7" viewBox="0 0 7 7"><path d="M7 0V7H0Z" fill="#1e1e1e"/></svg>
<svg style="left:63px;top:230px;" width="16" height="16" viewBox="0 0 16 16"><defs><linearGradient id="sg" x1="0" y1="0" x2="1" y2="1"><stop offset="0" stop-color="#f6e08a"/><stop offset="0.5" stop-color="#dcb028"/><stop offset="1" stop-color="#a8840c"/></linearGradient></defs><rect x="0" y="0" width="16" height="16" fill="url(#sg)"/><path d="M7.5 3Q4 3 4 6Q3 8.5 4.5 10.5Q5.5 13 8 12.5" fill="none" stroke="#b88e1a" stroke-width="0.9"/><path d="M8 3V13M8 3.5Q12 3 12 6L13 7L12 8.5Q12.5 12 8.5 12.5" fill="none" stroke="#b88e1a" stroke-width="0.9"/><path d="M5 7H7M6 6V8" stroke="#b88e1a" stroke-width="0.8"/></svg>
<span style="left:102px;top:249px;font-size:12px;line-height:14px;color:#1e1e1e;font-weight:normal;">License</span>
<svg style="left:81px;top:248px;" width="16" height="16" viewBox="0 0 16 16"><rect x="0.5" y="1.5" width="12" height="14" fill="#dceaf8" stroke="#8ab0d8"/><path d="M2.5 4H6M2.5 6.5H8M2.5 9H8M2.5 11.5H8M2.5 14H10" stroke="#8aa0b8" stroke-width="0.8"/><path d="M2 3V14" stroke="#8aa0b8" stroke-width="0.6"/><circle cx="10.5" cy="3" r="2.8" fill="#e86a2a"/><path d="M9 5V10L10.5 9L12 10V5" fill="#e0501a"/></svg>
<span style="left:102px;top:267px;font-size:12px;line-height:14px;color:#1e1e1e;font-weight:normal;">Real-Time</span>
<svg style="left:61px;top:270px;" width="7" height="7" viewBox="0 0 7 7"><path d="M7 0V7H0Z" fill="#1e1e1e"/></svg>
<svg style="left:81px;top:266px;" width="16" height="16" viewBox="0 0 16 16"><defs><radialGradient id="rtg" cx="0.35" cy="0.35" r="0.8"><stop offset="0" stop-color="#fbe68a"/><stop offset="1" stop-color="#c8980c"/></radialGradient></defs><path d="M8 0.5L10 1.5L12.5 1.5L13.5 4L15.5 6L15 8.5L15.5 10.5L13.5 12L12.5 14.5L10 14.5L8 15.5L6 14.5L3.5 14.5L2.5 12L0.5 10.5L1 8L0.5 6L2.5 4L3.5 1.5L6 1.5Z" fill="url(#rtg)"/><path d="M8 2V14M5 5Q3 8 5 11M11 5Q13 8 11 11" stroke="#c89818" stroke-width="0.8" fill="none"/></svg>
<span style="left:120px;top:285px;font-size:12px;line-height:14px;color:#1e1e1e;font-weight:normal;">I/O Idle Task</span>
<svg style="left:99px;top:284px;" width="16" height="16" viewBox="0 0 16 16"><path d="M1.5 1.5H8.5M1.5 1.5V15.5H9.5V13" stroke="#1c70d8" stroke-width="1.2" fill="none"/><rect x="3.5" y="6.5" width="11" height="6" fill="#cfe3fa" stroke="#1c70d8" stroke-width="1.2"/><rect x="5" y="8.5" width="7" height="1.2" fill="#1c70d8"/><rect x="5" y="10.5" width="6" height="1" fill="#1c70d8"/><path d="M9 0V5M7 3L9 5L11 3" stroke="#1c70d8" stroke-width="1.2" fill="none"/></svg>
<span style="left:102px;top:303px;font-size:12px;line-height:14px;color:#1e1e1e;font-weight:normal;">Tasks</span>
<svg style="left:62px;top:304px;" width="6" height="10" viewBox="0 0 6 10"><path d="M0.6 0.8L5.2 5L0.6 9.2Z" fill="none" stroke="#1e1e1e" stroke-width="1.1"/></svg>
<svg style="left:81px;top:302px;" width="16" height="16" viewBox="0 0 16 16"><path d="M1.5 3.5V15.5H9.5V13" stroke="#1c70d8" stroke-width="1.2" fill="none"/><path d="M4 2.5H10" stroke="#1c70d8" stroke-width="1.2"/><rect x="3.5" y="6.5" width="11" height="6" fill="#cfe3fa" stroke="#1c70d8" stroke-width="1.2"/><rect x="5" y="8" width="7" height="1" fill="#1c70d8"/><rect x="5" y="10" width="7" height="1" fill="#1c70d8"/><path d="M9 1V4M7.5 3L9 4.5L10.5 3" stroke="#1c70d8" fill="none"/><path d="M0 3H6M3 0V6" stroke="#5aa83a" stroke-width="2.2"/></svg>
<span style="left:102px;top:321px;font-size:12px;line-height:14px;color:#1e1e1e;font-weight:normal;">Routes</span>
<svg style="left:81px;top:320px;" width="16" height="16" viewBox="0 0 16 16"><g fill="none" stroke="#2c3e5a" stroke-width="1"><rect x="6.5" y="0.5" width="5" height="2"/><rect x="0.5" y="5.5" width="4" height="2"/><rect x="10.5" y="5.5" width="5" height="2"/><rect x="0.5" y="9.5" width="4" height="2"/><rect x="10.5" y="9.5" width="5" height="2"/><path d="M8.5 2.5V11M4.5 6.5H10.5M4.5 10.5H10.5M0.5 1.5H6.5"/></g></svg>
<span style="left:102px;top:339px;font-size:12px;line-height:14px;color:#1e1e1e;font-weight:normal;">Type System</span>
<svg style="left:81px;top:338px;" width="16" height="16" viewBox="0 0 16 16"><rect x="0" y="0" width="5" height="6" fill="#4a62c0"/><rect x="11" y="0" width="5" height="5" fill="#4a62c0"/><rect x="11" y="9" width="5" height="5" fill="#4a62c0"/><path d="M7.5 14.5V4L10 2M7.5 14.5H11" stroke="#909090" stroke-width="1" fill="none"/><circle cx="2.5" cy="10.5" r="2" fill="none" stroke="#424242"/><path d="M2.5 6V8" stroke="#5a8a3a"/></svg>
<span style="left:102px;top:357px;font-size:12px;line-height:14px;color:#1e1e1e;font-weight:normal;">TcCOM Objects</span>
<svg style="left:81px;top:356px;" width="16" height="16" viewBox="0 0 16 16"><rect x="0.5" y="0.5" width="15" height="15" fill="#dfe8ea" stroke="#2c3e5a"/><path d="M3 2H13V5H10V8H13V14H3V8H6V5H3Z" fill="#a0404a"/></svg>
<span style="left:84px;top:375px;font-size:12px;line-height:14px;color:#1e1e1e;font-weight:normal;">MOTION</span>
<svg style="left:63px;top:374px;" width="16" height="16" viewBox="0 0 16 16"><rect x="0.5" y="0.5" width="15" height="15" fill="#d8d8d8" stroke="#a0a0a0"/><rect x="1" y="12" width="14" height="3" fill="#bdbdbd"/><path d="M2 9H4L5 7H7L8 5H9L10 7H12L13 9H14" stroke="#7a7a7a" stroke-width="1" fill="none"/></svg>
<span style="left:84px;top:393px;font-size:12px;line-height:14px;color:#1e1e1e;font-weight:normal;">PLC</span>
<svg style="left:43px;top:396px;" width="7" height="7" viewBox="0 0 7 7"><path d="M7 0V7H0Z" fill="#1e1e1e"/></svg>
<svg style="left:63px;top:392px;" width="16" height="16" viewBox="0 0 16 16"><rect x="0.5" y="0.5" width="15" height="15" fill="#f0b27a" stroke="#d0701a"/><rect x="2.5" y="2.5" width="11" height="9" fill="#f6cfa4" stroke="#e0904a"/><rect x="3.5" y="3.5" width="3" height="4" fill="#fff3e6" stroke="#e0904a"/><rect x="8.5" y="3.5" width="4" height="8" fill="#eba46a" stroke="#e0904a"/><rect x="1" y="12" width="14" height="2" fill="#f8d8b8"/></svg>
<span style="left:102px;top:411px;font-size:12px;line-height:14px;color:#1e1e1e;font-weight:normal;">project</span>
<svg style="left:61px;top:414px;" width="7" height="7" viewBox="0 0 7 7"><path d="M7 0V7H0Z" fill="#1e1e1e"/></svg>
<svg style="left:81px;top:410px;" width="16" height="16" viewBox="0 0 16 16"><rect x="0.5" y="0.5" width="15" height="15" fill="#f0b27a" stroke="#d0701a"/><rect x="2.5" y="2.5" width="11" height="9" fill="#f6cfa4" stroke="#e0904a"/><rect x="3" y="3" width="4" height="6" fill="#10c010"/><rect x="8" y="3" width="5" height="10" fill="#10b010"/><rect x="1" y="12" width="7" height="2" fill="#f8d8b8"/></svg>
<span style="left:120px;top:429px;font-size:12px;line-height:14px;color:#1e1e1e;font-weight:normal;">project Project</span>
<svg style="left:79px;top:432px;" width="7" height="7" viewBox="0 0 7 7"><path d="M7 0V7H0Z" fill="#1e1e1e"/></svg>
<svg style="left:99px;top:428px;" width="16" height="16" viewBox="0 0 16 16"><rect x="3.5" y="2.5" width="12" height="12" fill="#c4d2ea" stroke="#6a88b8"/><rect x="3" y="2" width="13" height="1.5" fill="#1c5fd8"/><path d="M6 7H14M6 9H14M8 11H14" stroke="#1e1e1e" stroke-width="1"/><rect x="0" y="10" width="7" height="6" fill="#1e1e1e"/><rect x="2" y="10" width="2" height="2" fill="#fff"/><text x="4.5" y="3.5" font-size="5" font-family="Liberation Sans" font-weight="bold" fill="#f08a20">PLC</text></svg>
<svg style="left:93px;top:433px;" width="6" height="6" viewBox="0 0 6 6"><circle cx="3" cy="3" r="3" fill="#e51400"/><rect x="1" y="2.5" width="4" height="1.3" fill="#fff"/></svg>
<span style="left:138px;top:447px;font-size:12px;line-height:14px;color:#1e1e1e;font-weight:normal;">External Types</span>
<svg style="left:117px;top:446px;" width="16" height="16" viewBox="0 0 16 16"><defs><linearGradient id="fg" x1="0" y1="0" x2="0.3" y2="1"><stop offset="0" stop-color="#fff6c0"/><stop offset="1" stop-color="#e2a630"/></linearGradient></defs><path d="M0.5 2.5H5.5L6.5 4H14.5V13.5H0.5Z" fill="url(#fg)" stroke="#6e5a3a"/><rect x="1" y="5" width="13" height="1" fill="#fffbe0"/></svg>
<span style="left:138px;top:465px;font-size:12px;line-height:14px;color:#1e1e1e;font-weight:normal;">References</span>
<svg style="left:98px;top:466px;" width="6" height="10" viewBox="0 0 6 10"><path d="M0.6 0.8L5.2 5L0.6 9.2Z" fill="none" stroke="#1e1e1e" stroke-width="1.1"/></svg>
<svg style="left:117px;top:464px;" width="16" height="16" viewBox="0 0 16 16"><defs><linearGradient id="rg" x1="0" y1="0" x2="0" y2="1"><stop offset="0" stop-color="#f8f8f8"/><stop offset="1" stop-color="#b8b8b8"/></linearGradient></defs><path d="M0.5 2.5H5.5L6.5 4H14.5V13.5H0.5Z" fill="url(#rg)" stroke="#6a6a6a"/><rect x="4.5" y="7.5" width="8" height="3" rx="1.5" fill="#dce8f0" stroke="#4a7a8a"/><path d="M2 9H4" stroke="#4a7a8a"/></svg>
<span style="left:138px;top:483px;font-size:12px;line-height:14px;color:#1e1e1e;font-weight:normal;">DUTs</span>
<svg style="left:117px;top:482px;" width="16" height="16" viewBox="0 0 16 16"><defs><linearGradient id="fg" x1="0" y1="0" x2="0.3" y2="1"><stop offset="0" stop-color="#fff6c0"/><stop offset="1" stop-color="#e2a630"/></linearGradient></defs><path d="M0.5 2.5H5.5L6.5 4H14.5V13.5H0.5Z" fill="url(#fg)" stroke="#6e5a3a"/><rect x="1" y="5" width="13" height="1" fill="#fffbe0"/></svg>
<span style="left:138px;top:501px;font-size:12px;line-height:14px;color:#1e1e1e;font-weight:normal;">GVLs</span>
<svg style="left:117px;top:500px;" width="16" height="16" viewBox="0 0 16 16"><defs><linearGradient id="fg" x1="0" y1="0" x2="0.3" y2="1"><stop offset="0" stop-color="#fff6c0"/><stop offset="1" stop-color="#e2a630"/></linearGradient></defs><path d="M0.5 2.5H5.5L6.5 4H14.5V13.5H0.5Z" fill="url(#fg)" stroke="#6e5a3a"/><rect x="1" y="5" width="13" height="1" fill="#fffbe0"/></svg>
<span style="left:138px;top:519px;font-size:12px;line-height:14px;color:#1e1e1e;font-weight:normal;">POUs</span>
<svg style="left:97px;top:522px;" width="7" height="7" viewBox="0 0 7 7"><path d="M7 0V7H0Z" fill="#1e1e1e"/></svg>
<svg style="left:117px;top:518px;" width="16" height="16" viewBox="0 0 16 16"><path d="M0.5 2.5H5.5L6.5 4H13.5V6.5H3L0.5 13.5Z" fill="#f0d070" stroke="#6e5a3a"/><path d="M3 6.5H15.5L13 13.5H0.5Z" fill="#f8e4a0" stroke="#6e5a3a"/></svg>
<span style="left:156px;top:537px;font-size:12px;line-height:14px;color:#1e1e1e;font-weight:normal;">MAIN (PRG)</span>
<svg style="left:135px;top:536px;" width="16" height="16" viewBox="0 0 16 16"><path d="M3.5 0.5H10.5L14.5 4.5V15.5H3.5Z" fill="#fff" stroke="#424242"/><g fill="#1c40d0"><rect x="8" y="5" width="5" height="1"/><rect x="9" y="7" width="4" height="1"/><rect x="8" y="9" width="5" height="1"/><rect x="9" y="11" width="4" height="1"/></g><rect x="0" y="9" width="6" height="7" fill="#1e1e1e"/><rect x="2" y="9" width="2" height="2" fill="#fff"/></svg>
<svg style="left:129px;top:541px;" width="6" height="6" viewBox="0 0 6 6"><circle cx="3" cy="3" r="3" fill="#e51400"/><rect x="1" y="2.5" width="4" height="1.3" fill="#fff"/></svg>
<span style="left:156px;top:555px;font-size:12px;line-height:14px;color:#1e1e1e;font-weight:normal;">POU (PRG)</span>
<svg style="left:135px;top:554px;" width="16" height="16" viewBox="0 0 16 16"><path d="M3.5 0.5H10.5L14.5 4.5V15.5H3.5Z" fill="#fff" stroke="#424242"/><g fill="#1c40d0"><rect x="8" y="5" width="5" height="1"/><rect x="9" y="7" width="4" height="1"/><rect x="8" y="9" width="5" height="1"/><rect x="9" y="11" width="4" height="1"/></g><rect x="0" y="9" width="6" height="7" fill="#1e1e1e"/><rect x="2" y="9" width="2" height="2" fill="#fff"/></svg>
<svg style="left:129px;top:559px;" width="6" height="6" viewBox="0 0 6 6"><circle cx="3" cy="3" r="3" fill="#e51400"/><rect x="1" y="2.5" width="4" height="1.3" fill="#fff"/></svg>
<span style="left:138px;top:573px;font-size:12px;line-height:14px;color:#1e1e1e;font-weight:normal;">VISUs</span>
<svg style="left:117px;top:572px;" width="16" height="16" viewBox="0 0 16 16"><defs><linearGradient id="fg" x1="0" y1="0" x2="0.3" y2="1"><stop offset="0" stop-color="#fff6c0"/><stop offset="1" stop-color="#e2a630"/></linearGradient></defs><path d="M0.5 2.5H5.5L6.5 4H14.5V13.5H0.5Z" fill="url(#fg)" stroke="#6e5a3a"/><rect x="1" y="5" width="13" height="1" fill="#fffbe0"/></svg>
<span style="left:138px;top:591px;font-size:12px;line-height:14px;color:#1e1e1e;font-weight:normal;">PlcTask (PlcTask)</span>
<svg style="left:98px;top:592px;" width="6" height="10" viewBox="0 0 6 10"><path d="M0.6 0.8L5.2 5L0.6 9.2Z" fill="none" stroke="#1e1e1e" stroke-width="1.1"/></svg>
<svg style="left:117px;top:590px;" width="16" height="16" viewBox="0 0 16 16"><path d="M3.5 2.5H9M3.5 2.5V8" stroke="#1c70d8" stroke-width="1.2" fill="none"/><rect x="5.5" y="6.5" width="10" height="6" fill="#cfe3fa" stroke="#1c70d8"/><path d="M7 8.5H13M7 10.5H13" stroke="#1c70d8"/><path d="M8 1H13M11 0L13 1L11 3" stroke="#1c70d8" stroke-width="1.2" fill="none"/><rect x="0" y="9" width="6" height="7" fill="#1e1e1e"/><rect x="2" y="9" width="2" height="2" fill="#fff"/></svg>
<svg style="left:111px;top:595px;" width="6" height="6" viewBox="0 0 6 6"><circle cx="3" cy="3" r="3" fill="#e51400"/><rect x="1" y="2.5" width="4" height="1.3" fill="#fff"/></svg>
<span style="left:138px;top:609px;font-size:12px;line-height:14px;color:#1e1e1e;font-weight:normal;">project.tmc</span>
<svg style="left:117px;top:608px;" width="16" height="16" viewBox="0 0 16 16"><rect x="1" y="1" width="5" height="5" fill="#6bb04a"/><rect x="11" y="0" width="5" height="5" fill="#6bb04a"/><rect x="11" y="10" width="5" height="5" fill="#6bb04a"/><path d="M7.5 3V14H11M7.5 3L10 1" stroke="#8a8a8a" fill="none"/><path d="M1.5 11Q4 8.5 6.5 11Q4 13.5 1.5 11Z" fill="none" stroke="#424242"/><path d="M3 14.5H10" stroke="#424242"/></svg>
<svg style="left:111px;top:613px;" width="6" height="6" viewBox="0 0 6 6"><circle cx="3" cy="3" r="3" fill="#e51400"/><rect x="1" y="2.5" width="4" height="1.3" fill="#fff"/></svg>
<span style="left:120px;top:627px;font-size:12px;line-height:14px;color:#1e1e1e;font-weight:normal;">project Instance</span>
<svg style="left:99px;top:626px;" width="16" height="16" viewBox="0 0 16 16"><rect x="1.5" y="3.5" width="5" height="9" fill="#fff8f0" stroke="#d06a1a"/><path d="M0 5H1.5M0 8H1.5M0 11H1.5" stroke="#d06a1a"/><rect x="7.5" y="1.5" width="6" height="13" fill="none" stroke="#d06a1a"/><rect x="8" y="2" width="5" height="12" fill="#10b010"/><path d="M13.5 5H15M13.5 8H15M13.5 11H15" stroke="#d06a1a"/><rect x="3" y="5" width="2" height="6" fill="#f0d8c0"/></svg>
<span style="left:84px;top:645px;font-size:12px;line-height:14px;color:#1e1e1e;font-weight:normal;">SAFETY</span>
<svg style="left:63px;top:644px;" width="16" height="16" viewBox="0 0 16 16"><rect x="0.5" y="0.5" width="15" height="15" fill="#ffd000" stroke="#e0a800"/><path d="M7 3Q4 3 4 6Q3 8 4.5 10Q5 13 8 12.5Q11 13 11.5 10Q13 8 11.5 6Q11.5 3 8 3.5" fill="none" stroke="#d09000" stroke-width="1"/><path d="M8 4V12" stroke="#d09000" stroke-width="0.8"/></svg>
<span style="left:84px;top:663px;font-size:12px;line-height:14px;color:#1e1e1e;font-weight:normal;">C++</span>
<svg style="left:63px;top:662px;" width="16" height="16" viewBox="0 0 16 16"><defs><linearGradient id="cg" x1="0" y1="0" x2="1" y2="1"><stop offset="0" stop-color="#e6eec8"/><stop offset="1" stop-color="#7fa05a"/></linearGradient></defs><rect x="0.5" y="0.5" width="15" height="15" fill="url(#cg)" stroke="#2a6a2a"/><path d="M6 3Q3 3 3 6Q3 9 6 9" stroke="#2a8a2a" stroke-width="1" fill="none"/><path d="M5 9Q5 12 8 12M8 11H11M9.5 9.5V12.5M11 11H14M12.5 9.5V12.5" stroke="#2a8a2a" stroke-width="1" fill="none"/></svg>
<span style="left:84px;top:681px;font-size:12px;line-height:14px;color:#1e1e1e;font-weight:normal;">ANALYTICS</span>
<svg style="left:63px;top:680px;" width="16" height="16" viewBox="0 0 16 16"><defs><linearGradient id="ag" x1="0" y1="0" x2="1" y2="1"><stop offset="0" stop-color="#b4c0ea"/><stop offset="1" stop-color="#3e52a8"/></linearGradient></defs><rect x="0.5" y="0.5" width="15" height="15" fill="url(#ag)" stroke="#2a3a80"/><circle cx="7" cy="9" r="3.5" fill="none" stroke="#1a2a5a" stroke-width="1.2"/><path d="M3 14L14 3" stroke="#1a2a5a" stroke-width="1"/><path d="M5 9Q7 6 9 9" stroke="#1a2a5a" fill="none"/></svg>
<span style="left:84px;top:699px;font-size:12px;line-height:14px;color:#1e1e1e;font-weight:normal;">I/O</span>
<svg style="left:43px;top:702px;" width="7" height="7" viewBox="0 0 7 7"><path d="M7 0V7H0Z" fill="#1e1e1e"/></svg>
<svg style="left:63px;top:698px;" width="16" height="16" viewBox="0 0 16 16"><defs><linearGradient id="iog" x1="0" y1="0" x2="1" y2="1"><stop offset="0" stop-color="#f4dc80"/><stop offset="1" stop-color="#b88a10"/></linearGradient></defs><rect x="0" y="0" width="16" height="16" fill="url(#iog)"/><rect x="2.5" y="2.5" width="11" height="3" fill="#fff4c8" stroke="#a07010"/><path d="M10 5.5L6 10" stroke="#a07010"/><rect x="2.5" y="11.5" width="7" height="2.5" fill="#e0b840" stroke="#a07010"/></svg>
<span style="left:102px;top:717px;font-size:12px;line-height:14px;color:#1e1e1e;font-weight:normal;">Devices</span>
<svg style="left:81px;top:716px;" width="16" height="16" viewBox="0 0 16 16"><rect x="6.5" y="1.5" width="6" height="4" fill="#cfcfcf" stroke="#7a7a7a"/><path d="M8.5 5.5V13.5H11M8.5 9.5H11" stroke="#7a7a7a" fill="none"/><rect x="11.5" y="8.5" width="4" height="2" fill="#fff" stroke="#7a7a7a"/><rect x="11.5" y="12.5" width="4" height="2" fill="#fff" stroke="#7a7a7a"/><path d="M0 3.5H7M3.5 0V7" stroke="#2a7a2a" stroke-width="3"/><path d="M0.8 3.5H6.2M3.5 0.8V6.2" stroke="#5ab84a" stroke-width="1.4"/></svg>
<span style="left:102px;top:735px;font-size:12px;line-height:14px;color:#1e1e1e;font-weight:normal;">Mappings</span>
<svg style="left:81px;top:734px;" width="16" height="16" viewBox="0 0 16 16"><path d="M0 3.5H7M3.5 0V7" stroke="#2a7a2a" stroke-width="3"/><path d="M0.8 3.5H6.2M3.5 0.8V6.2" stroke="#5ab84a" stroke-width="1.4"/><path d="M5 7Q8 3 12 4" stroke="#f06030" stroke-width="1.8" fill="none"/><path d="M10 1L14 4L10 7Z" fill="#e02a20"/><rect x="0.5" y="9.5" width="6" height="6" fill="#d03a4a" stroke="#a02030"/><rect x="9.5" y="9.5" width="6" height="6" fill="#e8d84a" stroke="#d0a040"/></svg>
<div style="left:420px;top:117px;width:85px;height:19px;background:#fff29d"></div>
<div style="left:505px;top:117px;width:199px;height:19px;background:#364e6f"></div>
<span style="left:424px;top:121px;font-size:12px;line-height:14px;color:#000;font-weight:normal;">activity</span>
<svg style="left:472px;top:124px;shape-rendering:crispEdges" width="9" height="8" viewBox="0 0 9 8"><g fill="#5e4c2c"><rect x="0" y="3" width="3" height="1"/><rect x="3" y="0" width="1" height="7"/><rect x="4" y="1" width="4" height="1"/><rect x="7" y="1" width="1" height="5"/><rect x="4" y="5" width="4" height="2"/></g></svg>
<svg style="left:490px;top:123px;" width="10" height="8" viewBox="0 0 10 8"><path d="M0.5 0.5L9.5 7.5M9.5 0.5L0.5 7.5" stroke="#5e4c2c" stroke-width="1.4"/></svg>
<span style="left:510px;top:121px;font-size:12px;line-height:14px;color:#fff;font-weight:normal;">MAIN</span>
<span style="left:590px;top:121px;font-size:12px;line-height:14px;color:#fff;font-weight:normal;">POU [Online]</span>
<div style="left:420px;top:136px;width:1021px;height:2px;background:#fff29d"></div>
<svg style="left:1429px;top:126px;" width="9" height="5" viewBox="0 0 9 5"><path d="M0 0H9L4.5 5Z" fill="#d0d6e4"/></svg>
<div style="left:420px;top:138px;width:1021px;height:856px;background:#f0f0f0"></div>
<div style="left:420px;top:138px;width:1px;height:856px;background:#a9b4d0"></div>
<div style="left:1440px;top:138px;width:1px;height:856px;background:#a9b4d0"></div>
<div style="left:421px;top:138px;width:1017px;height:1px;background:#a0a0a0"></div>
<div style="left:421px;top:138px;width:1px;height:855px;background:#a0a0a0"></div>
<div style="left:422px;top:139px;width:1016px;height:1px;background:#696969"></div>
<div style="left:422px;top:139px;width:1px;height:853px;background:#696969"></div>
<div style="left:423px;top:140px;width:1015px;height:1px;background:#ffffff"></div>
<div style="left:423px;top:140px;width:1px;height:852px;background:#ffffff"></div>
<div style="left:1438px;top:139px;width:2px;height:855px;background:#ffffff"></div>
<div style="left:421px;top:992px;width:1019px;height:2px;background:#ffffff"></div>
<div style="left:420px;top:993px;width:1021px;height:1px;background:#a9b4d0"></div>
<div style="left:429px;top:167px;width:991px;height:807px;background:#fff;border:1px solid #d9d9d9;box-sizing:border-box"></div>
<div style="left:431px;top:149px;width:49px;height:19px;background:#f0f0f0;border:1px solid #d9d9d9;border-bottom:none;box-sizing:border-box"></div>
<span style="left:437px;top:153px;font-size:11px;line-height:13px;color:#000;font-weight:normal;letter-spacing:-0.3px">Settings</span>
<div style="left:524px;top:149px;width:50px;height:19px;background:#f0f0f0;border:1px solid #d9d9d9;border-bottom:none;box-sizing:border-box"></div>
<span style="left:529px;top:153px;font-size:11px;line-height:13px;color:#000;font-weight:normal;letter-spacing:-0.3px">Priorities</span>
<div style="left:573px;top:149px;width:80px;height:19px;background:#f0f0f0;border:1px solid #d9d9d9;border-bottom:none;box-sizing:border-box"></div>
<span style="left:580px;top:153px;font-size:11px;line-height:13px;color:#000;font-weight:normal;letter-spacing:-0.3px">C++ Debugger</span>
<div style="left:479px;top:147px;width:46px;height:22px;background:#fff;border:1px solid #d9d9d9;border-bottom:none;box-sizing:border-box"></div>
<span style="left:487px;top:150px;font-size:11px;line-height:13px;color:#000;font-weight:normal;letter-spacing:-0.3px">Online</span>
<span style="left:444px;top:181px;font-size:11px;line-height:13px;color:#000;font-weight:normal;letter-spacing:-0.2px">Real Time Usage:</span>
<span style="left:444px;top:574px;font-size:11px;line-height:13px;color:#000;font-weight:normal;letter-spacing:-0.2px">System Latency:</span>
<svg style="left:444px;top:197px;shape-rendering:crispEdges" width="963" height="370" viewBox="0 0 963 370"><rect x="2" y="2" width="961" height="367" fill="#ffffe0"/><rect x="17" y="2" width="1" height="367" fill="#62bcbc"/><rect x="37" y="2" width="1" height="367" fill="#62bcbc"/><rect x="57" y="2" width="1" height="367" fill="#62bcbc"/><rect x="77" y="2" width="1" height="367" fill="#62bcbc"/><rect x="97" y="2" width="1" height="367" fill="#62bcbc"/><rect x="117" y="2" width="1" height="367" fill="#62bcbc"/><rect x="137" y="2" width="1" height="367" fill="#62bcbc"/><rect x="157" y="2" width="1" height="367" fill="#62bcbc"/><rect x="177" y="2" width="1" height="367" fill="#62bcbc"/><rect x="197" y="2" width="1" height="367" fill="#62bcbc"/><rect x="217" y="2" width="1" height="367" fill="#62bcbc"/><rect x="237" y="2" width="1" height="367" fill="#62bcbc"/><rect x="257" y="2" width="1" height="367" fill="#62bcbc"/><rect x="277" y="2" width="1" height="367" fill="#62bcbc"/><rect x="297" y="2" width="1" height="367" fill="#62bcbc"/><rect x="317" y="2" width="1" height="367" fill="#62bcbc"/><rect x="337" y="2" width="1" height="367" fill="#62bcbc"/><rect x="357" y="2" width="1" height="367" fill="#62bcbc"/><rect x="377" y="2" width="1" height="367" fill="#62bcbc"/><rect x="397" y="2" width="1" height="367" fill="#62bcbc"/><rect x="417" y="2" width="1" height="367" fill="#62bcbc"/><rect x="437" y="2" width="1" height="367" fill="#62bcbc"/><rect x="457" y="2" width="1" height="367" fill="#62bcbc"/><rect x="477" y="2" width="1" height="367" fill="#62bcbc"/><rect x="497" y="2" width="1" height="367" fill="#62bcbc"/><rect x="517" y="2" width="1" height="367" fill="#62bcbc"/><rect x="537" y="2" width="1" height="367" fill="#62bcbc"/><rect x="557" y="2" width="1" height="367" fill="#62bcbc"/><rect x="577" y="2" width="1" height="367" fill="#62bcbc"/><rect x="597" y="2" width="1" height="367" fill="#62bcbc"/><rect x="617" y="2" width="1" height="367" fill="#62bcbc"/><rect x="637" y="2" width="1" height="367" fill="#62bcbc"/><rect x="657" y="2" width="1" height="367" fill="#62bcbc"/><rect x="677" y="2" width="1" height="367" fill="#62bcbc"/><rect x="697" y="2" width="1" height="367" fill="#62bcbc"/><rect x="717" y="2" width="1" height="367" fill="#62bcbc"/><rect x="737" y="2" width="1" height="367" fill="#62bcbc"/><rect x="757" y="2" width="1" height="367" fill="#62bcbc"/><rect x="777" y="2" width="1" height="367" fill="#62bcbc"/><rect x="797" y="2" width="1" height="367" fill="#62bcbc"/><rect x="817" y="2" width="1" height="367" fill="#62bcbc"/><rect x="837" y="2" width="1" height="367" fill="#62bcbc"/><rect x="857" y="2" width="1" height="367" fill="#62bcbc"/><rect x="877" y="2" width="1" height="367" fill="#62bcbc"/><rect x="897" y="2" width="1" height="367" fill="#62bcbc"/><rect x="917" y="2" width="1" height="367" fill="#62bcbc"/><rect x="937" y="2" width="1" height="367" fill="#62bcbc"/><rect x="957" y="2" width="1" height="367" fill="#62bcbc"/><rect x="2" y="148" width="960" height="1" fill="#62bcbc"/><rect x="2" y="221" width="960" height="1" fill="#62bcbc"/><rect x="2" y="294" width="960" height="1" fill="#62bcbc"/><rect x="2" y="368" width="960" height="1" fill="#62bcbc"/><rect x="2" y="74" width="960" height="2" fill="#3bbf3b"/><rect x="8" y="2" width="34" height="16" fill="#ffffe0"/><rect x="8" y="352" width="24" height="16" fill="#ffffe0"/><rect x="464" y="8" width="37" height="16" fill="#ffffe0"/><rect x="934" y="8" width="23" height="16" fill="#ffffe0"/><polyline points="936,363 938,364 939,367.5 962,367.5" fill="none" stroke="#3300ff" stroke-width="2" stroke-linejoin="miter"/><rect x="0" y="0" width="963" height="2" fill="#6e6e6e"/><rect x="0" y="0" width="2" height="370" fill="#6e6e6e"/><rect x="962" y="2" width="1" height="367" fill="#e6e6e6"/></svg>
<svg style="left:444px;top:589px;shape-rendering:crispEdges" width="963" height="371" viewBox="0 0 963 371"><rect x="2" y="2" width="961" height="368" fill="#ffffe0"/><rect x="17" y="2" width="1" height="368" fill="#62bcbc"/><rect x="37" y="2" width="1" height="368" fill="#62bcbc"/><rect x="57" y="2" width="1" height="368" fill="#62bcbc"/><rect x="77" y="2" width="1" height="368" fill="#62bcbc"/><rect x="97" y="2" width="1" height="368" fill="#62bcbc"/><rect x="117" y="2" width="1" height="368" fill="#62bcbc"/><rect x="137" y="2" width="1" height="368" fill="#62bcbc"/><rect x="157" y="2" width="1" height="368" fill="#62bcbc"/><rect x="177" y="2" width="1" height="368" fill="#62bcbc"/><rect x="197" y="2" width="1" height="368" fill="#62bcbc"/><rect x="217" y="2" width="1" height="368" fill="#62bcbc"/><rect x="237" y="2" width="1" height="368" fill="#62bcbc"/><rect x="257" y="2" width="1" height="368" fill="#62bcbc"/><rect x="277" y="2" width="1" height="368" fill="#62bcbc"/><rect x="297" y="2" width="1" height="368" fill="#62bcbc"/><rect x="317" y="2" width="1" height="368" fill="#62bcbc"/><rect x="337" y="2" width="1" height="368" fill="#62bcbc"/><rect x="357" y="2" width="1" height="368" fill="#62bcbc"/><rect x="377" y="2" width="1" height="368" fill="#62bcbc"/><rect x="397" y="2" width="1" height="368" fill="#62bcbc"/><rect x="417" y="2" width="1" height="368" fill="#62bcbc"/><rect x="437" y="2" width="1" height="368" fill="#62bcbc"/><rect x="457" y="2" width="1" height="368" fill="#62bcbc"/><rect x="477" y="2" width="1" height="368" fill="#62bcbc"/><rect x="497" y="2" width="1" height="368" fill="#62bcbc"/><rect x="517" y="2" width="1" height="368" fill="#62bcbc"/><rect x="537" y="2" width="1" height="368" fill="#62bcbc"/><rect x="557" y="2" width="1" height="368" fill="#62bcbc"/><rect x="577" y="2" width="1" height="368" fill="#62bcbc"/><rect x="597" y="2" width="1" height="368" fill="#62bcbc"/><rect x="617" y="2" width="1" height="368" fill="#62bcbc"/><rect x="637" y="2" width="1" height="368" fill="#62bcbc"/><rect x="657" y="2" width="1" height="368" fill="#62bcbc"/><rect x="677" y="2" width="1" height="368" fill="#62bcbc"/><rect x="697" y="2" width="1" height="368" fill="#62bcbc"/><rect x="717" y="2" width="1" height="368" fill="#62bcbc"/><rect x="737" y="2" width="1" height="368" fill="#62bcbc"/><rect x="757" y="2" width="1" height="368" fill="#62bcbc"/><rect x="777" y="2" width="1" height="368" fill="#62bcbc"/><rect x="797" y="2" width="1" height="368" fill="#62bcbc"/><rect x="817" y="2" width="1" height="368" fill="#62bcbc"/><rect x="837" y="2" width="1" height="368" fill="#62bcbc"/><rect x="857" y="2" width="1" height="368" fill="#62bcbc"/><rect x="877" y="2" width="1" height="368" fill="#62bcbc"/><rect x="897" y="2" width="1" height="368" fill="#62bcbc"/><rect x="917" y="2" width="1" height="368" fill="#62bcbc"/><rect x="937" y="2" width="1" height="368" fill="#62bcbc"/><rect x="957" y="2" width="1" height="368" fill="#62bcbc"/><rect x="2" y="75" width="960" height="1" fill="#62bcbc"/><rect x="2" y="148" width="960" height="1" fill="#62bcbc"/><rect x="2" y="222" width="960" height="1" fill="#62bcbc"/><rect x="2" y="295" width="960" height="1" fill="#62bcbc"/><rect x="2" y="368" width="960" height="2" fill="#3bbf3b"/><rect x="8" y="2" width="37" height="16" fill="#ffffe0"/><rect x="8" y="353" width="24" height="16" fill="#ffffe0"/><rect x="926" y="8" width="30" height="16" fill="#ffffe0"/><polyline points="935,208 937,208 937,281 938,281 938,353 941,353 941,283 942,283 942,215 943,226 944,217 945,226 945,198 946,198 946,170 947.5,171 947.5,219 948,195 949,211 949.5,196 950,219 951,200 952,213 952,222 953,222 953,212 955,211 956,215 957.5,215 957.5,229 960,229 961,203 962,203" fill="none" stroke="#3300ff" stroke-width="2" stroke-linejoin="miter"/><rect x="0" y="0" width="963" height="2" fill="#6e6e6e"/><rect x="0" y="0" width="2" height="371" fill="#6e6e6e"/><rect x="962" y="2" width="1" height="368" fill="#e6e6e6"/></svg>
<span style="left:455px;top:202px;font-size:11px;line-height:13px;color:#5f9ea0;font-weight:normal;letter-spacing:-0.6px">100 %</span>
<span style="left:454px;top:552px;font-size:11px;line-height:13px;color:#5f9ea0;font-weight:normal;letter-spacing:-0.5px">0 %</span>
<span style="left:910px;top:208px;font-size:11px;line-height:13px;color:#3300ff;font-weight:normal;letter-spacing:-0.2px">CPU 0</span>
<span style="left:1381px;top:208px;font-size:11px;line-height:13px;color:#3300ff;font-weight:normal;letter-spacing:-0.5px">0 %</span>
<span style="left:455px;top:594px;font-size:11px;line-height:13px;color:#5f9ea0;font-weight:normal;letter-spacing:-0.5px">100 µs</span>
<span style="left:454px;top:945px;font-size:11px;line-height:13px;color:#5f9ea0;font-weight:normal;letter-spacing:-0.5px">0 µs</span>
<span style="left:1372px;top:600px;font-size:11px;line-height:13px;color:#3300ff;font-weight:normal;letter-spacing:-0.4px">45 µs</span>
<div style="left:1447px;top:117px;width:475px;height:857px;background:#fff;border:1px solid #8e9bbc;box-sizing:border-box"></div>
<div style="left:1448px;top:118px;width:473px;height:21px;background:#4d6082"></div>
<span style="left:1452px;top:122px;font-size:12px;line-height:14px;color:#fff;font-weight:normal;">Properties</span>
<svg style="left:1873px;top:126px;" width="7" height="4" viewBox="0 0 7 4"><path d="M0 0H7L3.5 4Z" fill="#e0e4ee"/></svg>
<svg style="left:1889px;top:123px;" width="8" height="12" viewBox="0 0 8 12"><path d="M2 0.5H6V6H7.5V7H0.5V6H2Z" fill="none" stroke="#e8ebf2" stroke-width="1"/><path d="M4 7V12" stroke="#e8ebf2" stroke-width="1"/></svg>
<svg style="left:1905px;top:124px;" width="10" height="9" viewBox="0 0 10 9"><path d="M0.5 0.5L9.5 8.5M9.5 0.5L0.5 8.5" stroke="#e8ebf2" stroke-width="1.3"/></svg>
<div style="left:1448px;top:139px;width:473px;height:25px;background:#fcfcfc"></div>
<span style="left:1455px;top:144px;font-size:12px;line-height:14px;color:#000;font-weight:bold;">Real-Time</span>
<svg style="left:1910px;top:150px;" width="7" height="4" viewBox="0 0 7 4"><path d="M0 0H7L3.5 4Z" fill="#1e1e1e"/></svg>
<div style="left:1449px;top:164px;width:471px;height:25px;background:#cfd6e5"></div>
<div style="left:1451px;top:165px;width:23px;height:22px;background:#fffcf4;border:1px solid #3e5984;box-sizing:border-box"></div>
<svg style="left:1454px;top:168px;shape-rendering:crispEdges" width="17" height="16" viewBox="0 0 17 16"><g fill="#2a2a2a"><rect x="1" y="1" width="5" height="5"/><rect x="1" y="10" width="5" height="5"/><rect x="7" y="1" width="5" height="1"/><rect x="7" y="3" width="5" height="1"/><rect x="13" y="3" width="2" height="1"/><rect x="7" y="5" width="5" height="1"/><rect x="13" y="5" width="2" height="1"/><rect x="7" y="7" width="5" height="1"/><rect x="13" y="7" width="2" height="1"/><rect x="7" y="9" width="5" height="1"/><rect x="13" y="9" width="2" height="1"/><rect x="7" y="11" width="5" height="1"/><rect x="7" y="13" width="5" height="1"/><rect x="13" y="13" width="2" height="1"/></g><g fill="#fff"><rect x="3" y="2" width="1" height="3"/><rect x="2" y="3" width="3" height="1"/><rect x="3" y="11" width="1" height="3"/><rect x="2" y="12" width="3" height="1"/></g></svg>
<svg style="left:1478px;top:168px;" width="15" height="16" viewBox="0 0 15 16"><rect x="0" y="0" width="6" height="7" fill="#424242"/><path d="M1.5 6L3 1.5L4.5 6M2 4.5H4" stroke="#fff" stroke-width="0.9" fill="none"/><path d="M0.5 9.5H5.5L0.5 15H5.5" stroke="#424242" stroke-width="1.4" fill="none"/><path d="M11 3V13M8 10L11 14L14 10" stroke="#1c5fb0" stroke-width="1.8" fill="none"/></svg>
<div style="left:1500px;top:167px;width:1px;height:19px;background:#9aa0ac"></div>
<svg style="left:1507px;top:168px;" width="15" height="15" viewBox="0 0 15 15"><path d="M2 13L8 7" stroke="#b4b9c4" stroke-width="3" stroke-linecap="round"/><circle cx="10" cy="5" r="4.5" fill="#b4b9c4"/><path d="M10 0L15 5L12.5 6L9 2.5Z" fill="#cfd6e5"/></svg>
<div style="left:1448px;top:189px;width:473px;height:96px;background:#ececf0"></div>
<svg style="left:1451px;top:195px;shape-rendering:crispEdges" width="9" height="9" viewBox="0 0 9 9"><rect x="0.5" y="0.5" width="8" height="8" fill="#fff" stroke="#000"/><rect x="2" y="4" width="5" height="1" fill="#000"/></svg>
<span style="left:1467px;top:193px;font-size:12px;line-height:14px;color:#000;font-weight:bold;">Misc</span>
<div style="left:1463px;top:210px;width:458px;height:18px;background:#fff"></div>
<div style="left:1463px;top:228px;width:458px;height:1px;background:#ececf0"></div>
<span style="left:1467px;top:212px;font-size:12px;line-height:14px;color:#1e1e1e;font-weight:normal;">(Name)</span>
<span style="left:1681px;top:212px;font-size:12px;line-height:14px;color:#000;font-weight:bold;">Real-Time</span>
<div style="left:1463px;top:229px;width:458px;height:18px;background:#fff"></div>
<div style="left:1463px;top:247px;width:458px;height:1px;background:#ececf0"></div>
<span style="left:1467px;top:231px;font-size:12px;line-height:14px;color:#1e1e1e;font-weight:normal;">Disabled</span>
<span style="left:1681px;top:231px;font-size:12px;line-height:14px;color:#000;font-weight:bold;">Enabled</span>
<div style="left:1463px;top:248px;width:458px;height:18px;background:#fff"></div>
<div style="left:1463px;top:266px;width:458px;height:1px;background:#ececf0"></div>
<span style="left:1467px;top:250px;font-size:12px;line-height:14px;color:#717171;font-weight:normal;">ItemType</span>
<span style="left:1681px;top:250px;font-size:12px;line-height:14px;color:#6d6d6d;font-weight:bold;">31</span>
<div style="left:1463px;top:267px;width:458px;height:18px;background:#fff"></div>
<div style="left:1463px;top:285px;width:458px;height:1px;background:#ececf0"></div>
<span style="left:1467px;top:269px;font-size:12px;line-height:14px;color:#717171;font-weight:normal;">PathName</span>
<span style="left:1681px;top:269px;font-size:12px;line-height:14px;color:#6d6d6d;font-weight:bold;">TIRS</span>
<div style="left:1677px;top:210px;width:1px;height:75px;background:#ececf0"></div>
<div style="left:1449px;top:910px;width:471px;height:1px;background:#e6e7ee"></div>
<span style="left:1454px;top:918px;font-size:12px;line-height:14px;color:#000;font-weight:bold;">Misc</span>
<div style="left:1447px;top:973px;width:64px;height:21px;background:#fff"></div>
<div style="left:1447px;top:973px;width:1px;height:21px;background:#8e9bbc"></div>
<span style="left:1453px;top:976px;font-size:12px;line-height:14px;color:#000;font-weight:normal;">Properties</span>
<div style="left:1511px;top:973px;width:55px;height:21px;background:#4d6082"></div>
<span style="left:1518px;top:976px;font-size:12px;line-height:14px;color:#fff;font-weight:normal;">Toolbox</span>
</body></html>
